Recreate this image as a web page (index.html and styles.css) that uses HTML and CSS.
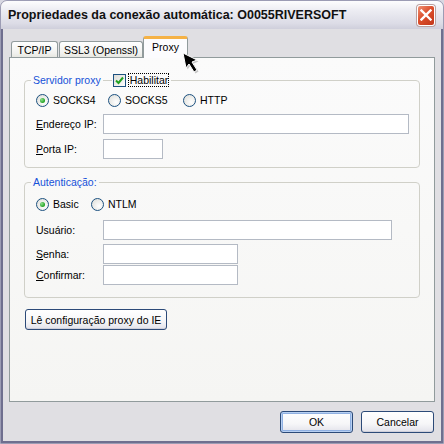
FILE: index.html
```html
<!DOCTYPE html>
<html lang="pt">
<head>
<meta charset="utf-8">
<link rel="stylesheet" href="styles.css">
</head>
<body>
<div class="window">
  <div class="titlebar">
    <span class="title">Propriedades da conexão automática: O0055RIVERSOFT</span>
    <span class="close">
      <svg width="12" height="12" viewBox="0 0 12 12"><path d="M1.5 1.5 L10.5 10.5 M10.5 1.5 L1.5 10.5" stroke="#fff" stroke-width="2.4" stroke-linecap="square"/></svg>
    </span>
  </div>
  <div class="body">
    <div class="tabs">
      <div class="tab t1">TCP/IP</div>
      <div class="tab t2">SSL3 (Openssl)</div>
      <div class="tab t3 active">Proxy</div>
    </div>
    <div class="panel">
      <fieldset class="group g1">
        <legend><span class="lg"><span class="lgtext">Servidor proxy</span><span class="seg"></span><span class="check"><svg width="9" height="9" viewBox="0 0 9 9"><path d="M1 4.5 L3.5 7 L8 1.5" fill="none" stroke="#21a121" stroke-width="2"/></svg></span><span class="focus">Habilitar</span></span></legend>
        <div class="radios">
          <span class="radio w72"><span class="dot on"></span>SOCKS4</span>
          <span class="radio w75"><span class="dot"></span>SOCKS5</span>
          <span class="radio"><span class="dot"></span>HTTP</span>
        </div>
        <div class="field f-ip"><label><u>E</u>ndereço IP:</label><span class="input i-ip"></span></div>
        <div class="field f-porta"><label><u>P</u>orta IP:</label><span class="input i-porta"></span></div>
      </fieldset>
      <fieldset class="group g2">
        <legend><span class="lg"><span class="lgtext">Autenticação:</span></span></legend>
        <div class="radios">
          <span class="radio w55"><span class="dot on"></span>Basic</span>
          <span class="radio"><span class="dot"></span>NTLM</span>
        </div>
        <div class="field f-user"><label>Usuário:</label><span class="input i-user"></span></div>
        <div class="field f-senha"><label><u>S</u>enha:</label><span class="input i-short"></span></div>
        <div class="field f-conf"><label><u>C</u>onfirmar:</label><span class="input i-short"></span></div>
      </fieldset>
      <button class="btn ie">Lê configuração proxy do IE</button>
    </div>
    <div class="actions">
      <button class="btn default">OK</button>
      <button class="btn">Cancelar</button>
    </div>
  </div>
  <svg class="cursor" width="20" height="24" viewBox="0 0 20 24">
    <path d="M2.5 2.5 L5.5 17.5 L8.5 13.5 L13.5 21.5 L16.5 19.5 L11.5 11.5 L16.5 9.5 Z" fill="#888" opacity="0.45"/>
    <path d="M1 1 L4 16 L7 12 L12 20 L15 18 L10 10 L15 8 Z" fill="#000" stroke="#fff" stroke-width="1" stroke-linejoin="miter"/>
  </svg>
</div>
</body>
</html>
```
FILE: styles.css
```css
html, body {
  margin: 0;
  padding: 0;
  background: #d8d8e2;
}

.window {
  width: 444px;
  height: 444px;
  box-sizing: border-box;
  border: 1px solid #9c9cb4;
  border-radius: 7px 7px 0 0;
  background: #e0dfe3;
  display: flex;
  flex-direction: column;
  font-family: "Liberation Sans", Arial, sans-serif;
  font-size: 10.5px;
  color: #000;
  position: relative;
  overflow: hidden;
}

.titlebar {
  height: 28px;
  flex: none;
  display: flex;
  align-items: center;
  padding: 0 8px 0 7px;
  background: linear-gradient(#fdfdfe, #ececf2 35%, #dcdce6 80%, #cfcfdb);
  border-radius: 6px 6px 0 0;
}

.title {
  flex: 1;
  font-weight: bold;
  font-size: 12.5px;
  color: #111;
  white-space: nowrap;
}

.close {
  width: 18px;
  height: 21px;
  box-sizing: border-box;
  border: 1px solid #fff;
  border-radius: 3px;
  background: linear-gradient(135deg, #ef9276, #dc4f2c 45%, #c2361a);
  display: flex;
  align-items: center;
  justify-content: center;
  box-shadow: 0 0 0 1px #b8a0a0;
}

.body {
  flex: 1;
  border: 2px solid #6f6f8f;
  border-top: 0;
  padding: 7px 6px 0;
  display: flex;
  flex-direction: column;
}

.tabs {
  height: 22px;
  display: flex;
  align-items: flex-end;
  padding-left: 2px;
}

.tab {
  height: 17px;
  box-sizing: border-box;
  border: 1px solid #919b9c;
  border-bottom: 0;
  border-radius: 3px 3px 0 0;
  background: linear-gradient(#ffffff, #f1f1ee 70%, #e4e4de);
  display: flex;
  align-items: center;
  justify-content: center;
  padding-bottom: 1px;
}

.t1 { width: 47px; margin-right: 1px; }
.t2 { width: 84px; }

.t3.active {
  width: 45px;
  height: 22px;
  position: relative;
  z-index: 1;
  border-top: 3px solid #f5b246;
  background: #fcfcfe;
  padding-bottom: 3px;
}

.panel {
  margin-top: -1px;
  height: 345px;
  box-sizing: border-box;
  border: 1px solid #919b9c;
  background: linear-gradient(#fbfbfb, #f5f5f3);
  padding: 15px 14px 0;
  display: flex;
  flex-direction: column;
  align-items: flex-start;
}

.group {
  align-self: stretch;
  margin: 0;
  min-width: 0;
  border: 1px solid #d0d0c8;
  border-radius: 4px;
  padding: 6px 10px 8px 11px;
}

.group legend {
  padding: 0 2px;
  margin-left: -5px;
  line-height: 14px;
}

.lg {
  display: inline-flex;
  align-items: center;
  height: 14px;
  vertical-align: top;
}

.lgtext {
  color: #1652d8;
}

.seg {
  width: 9px;
  height: 1px;
  background: #d0d0c8;
  margin: 0 1px 0 2px;
}

.check {
  width: 13px;
  height: 13px;
  box-sizing: border-box;
  border: 1px solid #1c5180;
  background: linear-gradient(135deg, #dcdcd7, #fdfdfd);
  display: flex;
  align-items: center;
  justify-content: center;
  margin-right: 2px;
}

.focus {
  color: #000;
  border: 1px dotted #000;
  padding: 0 1px 0 1px;
  line-height: 12px;
  width: 37px;
}

.radios {
  height: 14px;
  display: flex;
  align-items: center;
}

.radio {
  display: flex;
  align-items: center;
  gap: 4px;
}

.w72 { width: 72px; }
.w75 { width: 75px; }
.w55 { width: 55px; }

.dot {
  width: 13px;
  height: 13px;
  box-sizing: border-box;
  border-radius: 50%;
  border: 1px solid #1c5180;
  background: radial-gradient(circle at 65% 65%, #fff, #e6e6e2 70%, #d0d0ca);
  display: flex;
  align-items: center;
  justify-content: center;
}

.dot.on::after {
  content: "";
  width: 5px;
  height: 5px;
  border-radius: 50%;
  background: radial-gradient(circle at 35% 35%, #8ee08e, #21a121 70%);
}

.field {
  display: flex;
  align-items: center;
}

.field label {
  width: 67px;
  flex: none;
}

.input {
  display: block;
  height: 20px;
  box-sizing: border-box;
  border: 1px solid #b4bac4;
  background: #fff;
}

.f-ip { margin-top: 7px; }
.f-porta { margin-top: 5px; }
.i-ip { width: 306px; }
.i-porta { width: 60px; }

.g2 {
  margin-top: 7px;
  padding-top: 8px;
  padding-bottom: 12px;
}

.f-user { margin-top: 9px; }
.f-senha { margin-top: 4px; }
.f-conf { margin-top: 1px; }
.i-user { width: 289px; }
.i-short { width: 135px; }

.btn {
  font: inherit;
  color: #000;
  height: 21px;
  box-sizing: border-box;
  border: 1px solid #2c4a78;
  border-radius: 3px;
  background: linear-gradient(#ffffff, #f6f6f8 60%, #e2e2ea);
  box-shadow: inset 0 -1px 0 #d0d0da;
  padding: 0;
  margin: 0;
}

.ie {
  margin-top: 11px;
  margin-left: 1px;
  width: 142px;
}

.actions {
  display: flex;
  justify-content: flex-end;
  gap: 8px;
  margin-top: 9px;
  padding-right: 1px;
}

.actions .btn {
  width: 73px;
  height: 22px;
}

.btn.default {
  box-shadow: inset 0 0 0 1px #b8d0f2, inset 0 0 0 2px #8fb0e2;
}

.cursor {
  position: absolute;
  left: 181px;
  top: 51px;
  z-index: 5;
}
```
